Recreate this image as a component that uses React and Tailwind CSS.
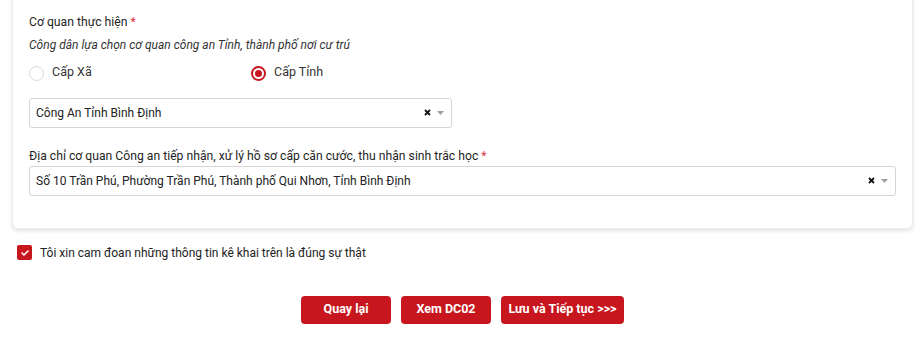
import React from 'react';

function Radio({ checked, label }) {
  return (
    <label className="flex items-center gap-[8px] cursor-pointer">
      {checked ? (
        <span className="w-[15px] h-[15px] rounded-full border-2 border-[#c8161e] flex items-center justify-center">
          <span className="w-[7px] h-[7px] rounded-full bg-[#c8161e]" />
        </span>
      ) : (
        <span className="w-[15px] h-[15px] rounded-full border border-[#d9d9d9] bg-white" />
      )}
      <span className="text-[12.5px] text-[#333] -mt-[3px]">{label}</span>
    </label>
  );
}

function SelectBox({ value, className = '' }) {
  return (
    <div className={`h-[30px] border border-[#d6d6d6] rounded-[3px] bg-white flex items-center pl-[6px] pr-[7px] ${className}`}>
      <span className="flex-1 text-[12px] text-[#222] truncate">{value}</span>
      <svg width="7" height="7" viewBox="0 0 7 7" className="mr-[6px]">
        <path d="M1 1l5 5M6 1L1 6" stroke="#111" strokeWidth="1.8" />
      </svg>
      <svg width="7" height="4" viewBox="0 0 7 4">
        <path d="M0 0h7L3.5 4z" fill="#a0a0a0" />
      </svg>
    </div>
  );
}

export default function App() {
  return (
    <div className="w-[917px] h-[341px] overflow-hidden bg-white" style={{ fontFamily: 'Roboto, "Noto Sans", sans-serif' }}>
      <div className="ml-3 mr-1">
        <div className="-mt-5 pt-[32px] pb-[32px] px-4 bg-white rounded-[6px] border border-[#ececec] shadow-[0_2px_4px_rgba(0,0,0,0.12)]">
          <div className="text-[12.2px] text-[#1f1f1f] leading-[18px]">
            Cơ quan thực hiện <span className="text-[#d9344a]">*</span>
          </div>
          <div className="mt-[5px] text-[12px] italic text-[#333] leading-[18px]">
            Công dân lựa chọn cơ quan công an Tỉnh, thành phố nơi cư trú
          </div>
          <div className="mt-[12px] flex">
            <div className="w-[222px]">
              <Radio label="Cấp Xã" />
            </div>
            <Radio checked label="Cấp Tỉnh" />
          </div>
          <SelectBox className="mt-[16px] w-[423px]" value="Công An Tỉnh Bình Định" />
          <div className="mt-[19px] text-[12.2px] text-[#1f1f1f] leading-[18px]">
            Địa chỉ cơ quan Công an tiếp nhận, xử lý hồ sơ cấp căn cước, thu nhận sinh trắc học{' '}
            <span className="text-[#d9344a]">*</span>
          </div>
          <SelectBox className="mt-[1px]" value="Số 10 Trần Phú, Phường Trần Phú, Thành phố Qui Nhơn, Tỉnh Bình Định" />
        </div>

        <div className="mt-[15px] ml-[5px] flex items-center gap-[8px]">
          <span className="w-[15px] h-[15px] rounded-[2px] bg-[#c8161e] flex items-center justify-center">
            <svg width="8" height="6" viewBox="0 0 8 6">
              <path d="M1 3l2 2 4-4" stroke="white" strokeWidth="1.6" fill="none" strokeLinecap="round" strokeLinejoin="round" />
            </svg>
          </span>
          <span className="text-[12px] text-[#222]">Tôi xin cam đoan những thông tin kê khai trên là đúng sự thật</span>
        </div>

        <div className="mt-[34px] flex justify-center gap-[10px]">
          <button className="w-[90px] h-[28px] rounded-[4px] bg-[#c8161e] text-white text-[12.5px] font-bold">Quay lại</button>
          <button className="w-[90px] h-[28px] rounded-[4px] bg-[#c8161e] text-white text-[12.5px] font-bold">Xem DC02</button>
          <button className="w-[123px] h-[28px] rounded-[4px] bg-[#c8161e] text-white text-[12.5px] font-bold">Lưu và Tiếp tục &gt;&gt;&gt;</button>
        </div>
      </div>
    </div>
  );
}
